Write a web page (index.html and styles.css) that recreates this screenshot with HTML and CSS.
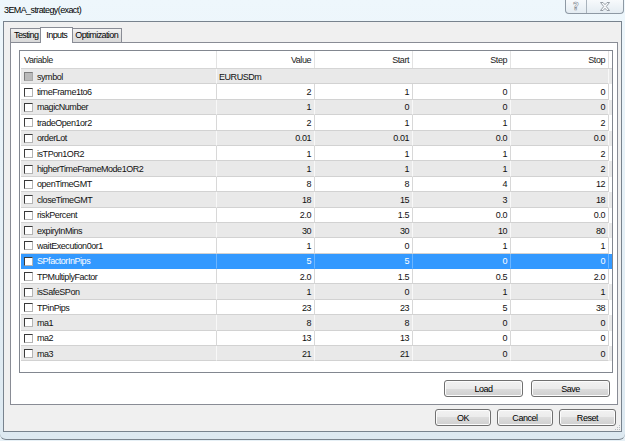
FILE: index.html
```html
<!DOCTYPE html>
<html lang="en">
<head>
    <meta charset="UTF-8">
    <title>3EMA_strategy(exact)</title>
    <link rel="stylesheet" href="styles.css">
</head>
<body>
    <div class="window">
        <div class="titlebar">
            <span class="title">3EMA_strategy(exact)</span>
            <div class="caption">
                <span class="cap-btn cap-help">?</span>
                <span class="cap-btn cap-close">
                    <svg width="10" height="9" viewBox="0 0 10 9">
                        <path d="M0.5 0.5h2.5l2 2.2 2-2.2h2.5l-3.2 4 3.2 4h-2.5l-2-2.2-2 2.2h-2.5l3.2-4z" fill="#fbfcfd" stroke="#8c949c" stroke-width="0.9"/>
                    </svg>
                </span>
            </div>
        </div>

        <div class="client">
            <div class="tabs">
                <div class="tab">Testing</div>
                <div class="tab active">Inputs</div>
                <div class="tab">Optimization</div>
            </div>

            <div class="tab-panel">
                <div class="list">
                    <div class="list-head">
                        <div class="hcell">Variable</div>
                        <div class="hcell num">Value</div>
                        <div class="hcell num">Start</div>
                        <div class="hcell num">Step</div>
                        <div class="hcell num">Stop</div>
                    </div>
                    <div id="rows"></div>
                </div>
                <div class="panel-buttons">
                    <button class="btn btn-wide">Load</button>
                    <button class="btn btn-wide">Save</button>
                </div>
            </div>

            <div class="dialog-buttons">
                <button class="btn btn-ok">OK</button>
                <button class="btn btn-ok">Cancel</button>
                <button class="btn btn-reset">Reset</button>
            </div>

            <svg class="grip" width="7" height="7" viewBox="0 0 7 7">
                <g fill="#b8bcc0">
                    <rect x="5" y="1" width="1" height="1"/>
                    <rect x="3" y="3" width="1" height="1"/>
                    <rect x="5" y="3" width="1" height="1"/>
                    <rect x="1" y="5" width="1" height="1"/>
                    <rect x="3" y="5" width="1" height="1"/>
                    <rect x="5" y="5" width="1" height="1"/>
                </g>
            </svg>
        </div>
    </div>

    <script>
        // name, value, start, step, stop
        const inputs = [
            ["symbol", "EURUSDm"],
            ["timeFrame1to6", "2", "1", "0", "0"],
            ["magicNumber", "1", "0", "0", "0"],
            ["tradeOpen1or2", "2", "1", "1", "2"],
            ["orderLot", "0.01", "0.01", "0.0", "0.0"],
            ["isTPon1OR2", "1", "1", "1", "2"],
            ["higherTimeFrameMode1OR2", "1", "1", "1", "2"],
            ["openTimeGMT", "8", "8", "4", "12"],
            ["closeTimeGMT", "18", "15", "3", "18"],
            ["riskPercent", "2.0", "1.5", "0.0", "0.0"],
            ["expiryInMins", "30", "30", "10", "80"],
            ["waitExecution0or1", "1", "0", "1", "1"],
            ["SPfactorInPips", "5", "5", "0", "0"],
            ["TPMultiplyFactor", "2.0", "1.5", "0.5", "2.0"],
            ["isSafeSPon", "1", "0", "1", "1"],
            ["TPinPips", "23", "23", "5", "38"],
            ["ma1", "8", "8", "0", "0"],
            ["ma2", "13", "13", "0", "0"],
            ["ma3", "21", "21", "0", "0"]
        ];
        const selected = 12;

        const rows = document.getElementById("rows");
        inputs.forEach(function (item, i) {
            const row = document.createElement("div");
            row.className = "row";
            if (i % 2 === 0) row.classList.add("alt");
            if (i === selected) row.classList.add("selected");

            const name = document.createElement("div");
            name.className = "cell name";
            const box = document.createElement("span");
            box.className = i === 0 ? "check disabled" : "check";
            name.appendChild(box);
            name.appendChild(document.createTextNode(item[0]));
            row.appendChild(name);

            if (item.length === 2) {
                const text = document.createElement("div");
                text.className = "cell wide";
                text.textContent = item[1];
                row.appendChild(text);
            } else {
                for (let c = 1; c < 5; c++) {
                    const cell = document.createElement("div");
                    cell.className = "cell num";
                    cell.textContent = item[c];
                    row.appendChild(cell);
                }
            }
            rows.appendChild(row);
        });
    </script>
</body>
</html>
```

FILE: styles.css
```css
/* General */
* {
    box-sizing: border-box;
}

body {
    margin: 0;
    font-family: "Liberation Sans", Arial, sans-serif;
    font-size: 9px;
    letter-spacing: -0.45px;
    color: #000;
    background: #e6f0f6;
}

.window {
    width: 625px;
    height: 440px;
    display: flex;
    flex-direction: column;
    background: linear-gradient(#eef7fc, #dde9f1);
    border-bottom: 1px solid #7b858f;
    border-radius: 0 0 6px 6px;
}

/* Title bar */
.titlebar {
    height: 21px;
    display: flex;
    align-items: flex-start;
    padding-left: 4px;
}

.title {
    margin-top: 5px;
    line-height: 11px;
    letter-spacing: -0.6px;
    color: #000;
}

.caption {
    margin-left: auto;
    margin-right: 1px;
    height: 14px;
    display: flex;
    border: 1px solid #8e99a4;
    border-top: none;
    border-radius: 0 0 4px 4px;
    background: linear-gradient(#f7fafc, #e4ecf2);
}

.cap-btn {
    display: flex;
    align-items: center;
    justify-content: center;
}

.cap-help {
    width: 21px;
    border-right: 1px solid #a9b3bc;
    font-family: "DejaVu Sans", sans-serif;
    font-weight: bold;
    font-size: 10px;
    letter-spacing: 0;
    color: #fbfcfd;
    -webkit-text-stroke: 0.6px #8c949c;
}

.cap-close {
    width: 36px;
}

/* Client area */
.client {
    flex: 1;
    margin: 0 3px 7px 3px;
    padding: 5px 3px 0 6px;
    border: 1px solid #78838e;
    background: #f0f0f0;
    display: flex;
    flex-direction: column;
    position: relative;
}

/* Tabs */
.tabs {
    height: 16px;
    margin-bottom: -1px;
    display: flex;
    align-items: flex-start;
}

.tab {
    margin-top: 1px;
    height: 14px;
    padding: 0 3px;
    line-height: 13px;
    letter-spacing: -0.6px;
    border: 1px solid #898c95;
    border-bottom: none;
    background: linear-gradient(#f3f3f3, #e3e3e3 50%, #d9d9d9);
}

.tab.active {
    margin: 0 -2px;
    height: 16px;
    padding: 0 5px;
    line-height: 14px;
    background: #fff;
    position: relative;
    z-index: 1;
}

.tab-panel {
    border: 1px solid #898c95;
    background: #fff;
    padding: 7px 4px 7px 8px;
    display: flex;
    flex-direction: column;
}

/* Inputs list */
.list {
    height: 323px;
    border: 1px solid #828790;
    padding-left: 1px;
    background: #fff;
}

.list-head {
    height: 18px;
    display: grid;
    grid-template-columns: 196px repeat(4, 98px);
    border-bottom: 1px solid #d5d5d5;
}

.hcell {
    display: flex;
    align-items: center;
    padding: 0 3px;
    border-right: 1px solid #e3e3e3;
    color: #1a1a1a;
}

.hcell.num {
    justify-content: flex-end;
}

.row {
    height: 15.4px;
    display: grid;
    grid-template-columns: 196px repeat(4, 98px);
    background: #fff;
}

.row.alt {
    background: #e9e9e9;
}

.cell {
    display: flex;
    align-items: center;
    padding: 1px 3px 0;
    border-right: 1px solid #d8d8d8;
    border-bottom: 1px solid #d2d2d2;
    color: #111;
    white-space: nowrap;
}

.row.alt .cell {
    border-right-color: #f8f8f8;
}

.cell.num {
    justify-content: flex-end;
}

.cell.wide {
    grid-column: span 4;
    padding-left: 2px;
}

.check {
    width: 9px;
    height: 9px;
    margin-right: 4px;
    border: 1px solid;
    border-color: #3a3a3a #b4b4b4 #b4b4b4 #3a3a3a;
    background: #fff;
    flex: none;
}

.check.disabled {
    border-color: #7c7c7c #a8a8a8 #a8a8a8 #7c7c7c;
    background: #b9b9b9;
}

.row.selected {
    background: #3399ff;
}

.row.selected .cell {
    color: #fff;
    border-right-color: #6cb5ff;
    border-bottom-color: #3399ff;
}

/* Buttons */
.panel-buttons,
.dialog-buttons {
    display: flex;
    justify-content: flex-end;
}

.panel-buttons {
    margin-top: 7px;
    padding-right: 3px;
    gap: 8px;
}

.dialog-buttons {
    margin-top: 4px;
    margin-right: 2px;
    gap: 6px;
}

.btn {
    height: 17px;
    padding: 0;
    font: inherit;
    letter-spacing: inherit;
    color: #000;
    border: 1px solid #707070;
    border-radius: 3px;
    background: linear-gradient(#f2f2f2, #ebebeb 50%, #dddddd 50%, #cfcfcf);
    box-shadow: inset 0 0 0 1px #fcfcfc;
}

.btn-wide {
    width: 79px;
}

.btn-ok {
    width: 56px;
}

.btn-reset {
    width: 57px;
}

.grip {
    position: absolute;
    right: 0;
    bottom: 0;
}
```
